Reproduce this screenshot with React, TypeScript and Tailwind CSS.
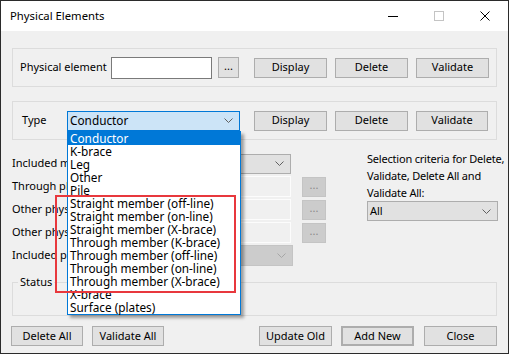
import React from "react";

const Chevron = ({ color = "#606060" }: { color?: string }) => (
  <svg width="9" height="5" viewBox="0 0 9 5" className="shrink-0">
    <polyline points="0.5,0.5 4.5,4.5 8.5,0.5" fill="none" stroke={color} strokeWidth="1" />
  </svg>
);

const Btn = ({ children, w = "w-[73px]", extra = "" }: { children: React.ReactNode; w?: string; extra?: string }) => (
  <div className={`${w} h-[20px] bg-[#e1e1e1] border border-[#adadad] flex items-center justify-center shrink-0 whitespace-nowrap ${extra}`}>
    {children}
  </div>
);

const items = [
  "Conductor",
  "K-brace",
  "Leg",
  "Other",
  "Pile",
  "Straight member (off-line)",
  "Straight member (on-line)",
  "Straight member (X-brace)",
  "Through member (K-brace)",
  "Through member (off-line)",
  "Through member (on-line)",
  "Through member (X-brace)",
  "X-brace",
  "Surface (plates)",
];

export default function App() {
  return (
    <div
      className="relative w-[509px] h-[354px] border border-[#2b2b2b] bg-[#f0f0f0] text-[11px] text-black overflow-hidden flex flex-col"
      style={{ fontFamily: '"Noto Sans", "Open Sans", sans-serif' }}
    >
      {/* Title bar */}
      <div className="h-[30px] bg-white flex items-center shrink-0">
        <div className="pl-[9px] flex-1 text-[11.3px] whitespace-nowrap">Physical Elements</div>
        <div className="w-[46px] h-full flex items-center justify-center">
          <div className="w-[10px] h-px bg-black" />
        </div>
        <div className="w-[46px] h-full flex items-center justify-center">
          <div className="w-[10px] h-[10px] border border-[#c4c4c4]" />
        </div>
        <div className="w-[46px] h-full flex items-center justify-center">
          <svg width="10" height="10" viewBox="0 0 10 10">
            <path d="M0.5 0.5 L9.5 9.5 M9.5 0.5 L0.5 9.5" stroke="#000" strokeWidth="1" />
          </svg>
        </div>
      </div>

      {/* Body */}
      <div className="px-[11px] pt-[17px] flex flex-col">
        {/* Group 1 */}
        <div className="h-[39px] border border-[#dcdcdc] flex items-center pl-[7px]">
          <div className="w-[91px] shrink-0 whitespace-nowrap">Physical element</div>
          <div className="w-[101px] h-[22px] bg-white border border-[#7a7a7a] shrink-0" />
          <div className="ml-[6px] w-[21px] h-[21px] bg-[#e1e1e1] border border-[#adadad] flex items-center justify-center shrink-0 leading-none pb-[4px]">
            ...
          </div>
          <div className="ml-[15px] flex gap-[8px]">
            <Btn>Display</Btn>
            <Btn>Delete</Btn>
            <Btn>Validate</Btn>
          </div>
        </div>

        {/* Group 2 */}
        <div className="mt-[14px] h-[39px] border border-[#dcdcdc] flex items-center pl-[9px]">
          <div className="w-[45px] shrink-0">Type</div>
          <div className="w-[173px] h-[20px] bg-[#cce4f7] border border-[#0078d7] flex items-center justify-between pl-[2px] pr-[6px] shrink-0 text-[11.8px]">
            <span>Conductor</span>
            <Chevron />
          </div>
          <div className="ml-[14px] flex gap-[8px]">
            <Btn>Display</Btn>
            <Btn>Delete</Btn>
            <Btn w="w-[72px]">Validate</Btn>
          </div>
        </div>

        {/* Rows section */}
        <div className="mt-[10px] flex">
          <div className="w-[314px] pt-[2px] flex flex-col shrink-0">
            <div className="h-[23px] flex items-center">
              <div className="w-[128px] shrink-0 whitespace-nowrap">Included members</div>
              <div className="w-[151px] h-[20px] bg-[#e1e1e1] border border-[#adadad] flex items-center justify-end pr-[6px]">
                <Chevron />
              </div>
            </div>
            {[0, 1, 2].map((i) => (
              <div key={i} className="h-[23px] flex items-center">
                <div className="w-[128px] shrink-0 whitespace-nowrap">
                  {i === 0 ? "Through physical" : "Other physical"}
                </div>
                <div className="w-[151px] h-[21px] bg-[#f0f0f0] border border-[#fcfcfc] shrink-0" />
                <div className="ml-[11px] w-[24px] h-[20px] bg-[#cccccc] border border-[#c4c4c4] flex items-center justify-center text-[#8a8a8a] leading-none pb-[4px] shrink-0">
                  ...
                </div>
              </div>
            ))}
            <div className="h-[23px] flex items-center">
              <div className="w-[128px] shrink-0 whitespace-nowrap">Included plates</div>
              <div className="w-[153px] h-[21px] bg-[#cccccc] border border-[#c4c4c4] flex items-center justify-end pr-[6px]">
                <Chevron color="#a6a6a6" />
              </div>
            </div>
          </div>
          <div className="ml-[41px] flex flex-col w-[131px]">
            <div className="leading-[17px] whitespace-nowrap tracking-[-0.2px]">
              Selection criteria for Delete,
              <br />
              Validate, Delete All and
              <br />
              Validate All:
            </div>
            <div className="h-[20px] bg-[#e1e1e1] border border-[#adadad] flex items-center justify-between pl-[2px] pr-[6px]">
              <span>All</span>
              <Chevron />
            </div>
          </div>
        </div>

        {/* Status group */}
        <div className="mt-[15px] h-[34px] border border-[#dcdcdc] relative">
          <div className="absolute left-[5px] top-[-9px] px-[2px] bg-[#f0f0f0] leading-[16px]">Status</div>
        </div>

        {/* Bottom buttons */}
        <div className="mt-[10px] flex ml-[-1px]">
          <Btn w="w-[72px]">Delete All</Btn>
          <Btn w="w-[72px]" extra="ml-[9px]">Validate All</Btn>
          <div className="flex-1" />
          <Btn>Update Old</Btn>
          <Btn extra="ml-[9px] border-2 border-[#0078d7]">Add New</Btn>
          <Btn extra="ml-[10px]">Close</Btn>
        </div>
      </div>

      {/* Dropdown list overlay */}
      <div className="absolute left-[66px] top-[130px] w-[174px] bg-white border border-[#0078d7] shadow-[3px_3px_3px_rgba(0,0,0,0.35)] flex flex-col text-[11.8px]">
        {items.map((t, i) => (
          <div
            key={t}
            className={`h-[13px] leading-[13px] pl-[2px] whitespace-nowrap ${i === 0 ? "bg-[#0078d7] text-white" : ""}`}
          >
            {t}
          </div>
        ))}
      </div>

      {/* Red highlight rectangle */}
      <div className="absolute left-[54px] top-[194px] w-[181px] h-[98px] border-2 border-[#e8383d]" />
    </div>
  );
}
